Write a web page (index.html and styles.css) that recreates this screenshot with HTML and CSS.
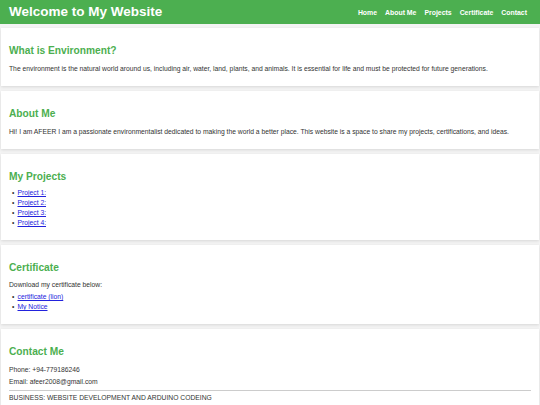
FILE: index.html
```html
<!DOCTYPE html>
<html>
<head>
<meta charset="utf-8">
<title>Welcome to My Website</title>
<link rel="stylesheet" href="styles.css">
</head>
<body>
<header class="site-header">
  <h1 class="site-title">Welcome to My Website</h1>
  <nav class="site-nav">
    <a href="#">Home</a>
    <a href="#">About Me</a>
    <a href="#">Projects</a>
    <a href="#">Certificate</a>
    <a href="#">Contact</a>
  </nav>
</header>
<main>
  <section class="card">
    <h2>What is Environment?</h2>
    <p>The environment is the natural world around us, including air, water, land, plants, and animals. It is essential for life and must be protected for future generations.</p>
  </section>
  <section class="card">
    <h2>About Me</h2>
    <p>Hi! I am AFEER I am a passionate environmentalist dedicated to making the world a better place. This website is a space to share my projects, certifications, and ideas.</p>
  </section>
  <section class="card">
    <h2>My Projects</h2>
    <ul class="list">
      <li><a href="#">Project 1:</a></li>
      <li><a href="#">Project 2:</a></li>
      <li><a href="#">Project 3:</a></li>
      <li><a href="#">Project 4:</a></li>
    </ul>
  </section>
  <section class="card">
    <h2>Certificate</h2>
    <p class="tight">Download my certificate below:</p>
    <ul class="list">
      <li><a href="#">certificate (lion)</a></li>
      <li><a href="#">My Notice</a></li>
    </ul>
  </section>
  <section class="card">
    <h2>Contact Me</h2>
    <p class="line">Phone: +94-779186246</p>
    <p class="line">Email: afeer2008@gmail.com</p>
    <hr class="rule">
    <p class="line">BUSINESS: WEBSITE DEVELOPMENT AND ARDUINO CODEING</p>
  </section>
</main>
</body>
</html>
```

FILE: styles.css
```css
html, body {
  margin: 0;
  padding: 0;
}
body {
  font-family: "Liberation Sans", Arial, sans-serif;
  background: #f4f4f4;
  color: #333;
  font-size: 6.75px;
}
.site-header {
  background: #4CAF50;
  height: 24px;
  display: flex;
  align-items: center;
  justify-content: space-between;
  padding: 0 13px 0 9px;
}
.site-title {
  margin: 0;
  color: #fff;
  font-size: 13.5px;
  font-weight: bold;
  line-height: 1;
}
.site-nav {
  display: flex;
  gap: 8px;
}
.site-nav a {
  color: #fff;
  text-decoration: none;
  font-weight: bold;
  font-size: 6.9px;
}
main {
  padding-top: 4px;
}
.card {
  background: #fff;
  margin: 0 1px 5px 1px;
  padding: 16px 8px 12px 8px;
  box-shadow: 0 1px 3px rgba(0,0,0,0.12);
}
.card h2 {
  margin: 0;
  color: #4CAF50;
  font-size: 10.2px;
  line-height: 14px;
  font-weight: bold;
}
.card p {
  margin: 6px 0 0 0;
  line-height: 10px;
}
.card p.tight {
  margin-top: 5px;
}
.list {
  margin: 4px 0 0 0;
  padding-left: 3px;
  line-height: 10px;
  list-style: none;
}
.list li::before {
  content: "\2022";
  display: inline-block;
  width: 5.5px;
  color: #333;
}
.card p.tight + .list {
  margin-top: 2px;
}
.list a {
  color: #2222dd;
}
.card p.line {
  margin-top: 2px;
  line-height: 10px;
}
.card h2 + p.line {
  margin-top: 6px;
}
.rule {
  border: 0;
  border-top: 1px solid #ccc;
  margin: 3px 0 2px 0;
}
```
